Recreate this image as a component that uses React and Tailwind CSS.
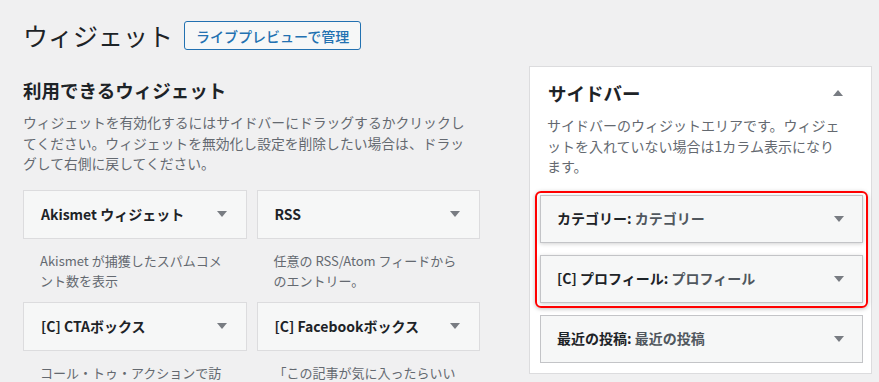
import React from 'react';

const Arrow = ({ up = false }) => (
  <svg width="10" height="6" viewBox="0 0 10 6" className="shrink-0">
    <polygon points={up ? '0,6 10,6 5,0' : '0,0 10,0 5,6'} fill="#787c82" />
  </svg>
);

const available = [
  { name: 'Akismet ウィジェット', desc: ['Akismet が捕獲したスパムコメ', 'ント数を表示'] },
  { name: 'RSS', desc: ['任意の RSS/Atom フィードから', 'のエントリー。'] },
  { name: '[C] CTAボックス', desc: ['コール・トゥ・アクションで訪', ''] },
  { name: '[C] Facebookボックス', desc: ['「この記事が気に入ったらいい', ''] },
];

function WidgetCard({ name }) {
  return (
    <div className="h-[49px] flex items-center justify-between pl-[17px] pr-[19px] bg-[#f6f7f7] border border-[#dcdcde]">
      <span className="text-[14px] font-semibold text-[#1d2327]">{name}</span>
      <Arrow />
    </div>
  );
}

function SidebarCard({ title, sub, shadow }) {
  return (
    <div
      className={
        'h-[48px] flex items-center justify-between pl-[16px] pr-[18px] bg-[#f6f7f7] border border-[#c3c4c7] ' +
        (shadow ? 'shadow-[0_1px_4px_rgba(0,0,0,0.18)]' : '')
      }
    >
      <span className="text-[14px] font-semibold">
        <span className="text-[#1d2327]">{title}:</span>
        <span className="text-[#50575e]"> {sub}</span>
      </span>
      <Arrow />
    </div>
  );
}

export default function App() {
  return (
    <div
      className="h-[382px] w-[879px] overflow-hidden bg-[#f0f0f1] pl-[23px]"
      style={{ fontFamily: '"Noto Sans CJK JP", "Noto Sans", sans-serif' }}
    >
      <div className="pt-[21px] flex items-center gap-[11px] h-[50px]">
        <h1 className="text-[25px] leading-[29px] font-normal text-[#1d2327]">ウィジェット</h1>
        <button className="h-[29px] px-[11px] rounded-[3px] border border-[#2271b1] bg-[#f6f7f7] text-[#2271b1] text-[14px] font-medium leading-none">
          ライブプレビューで管理
        </button>
      </div>

      <div className="flex gap-[49px]">
        <div className="w-[457px] shrink-0">
          <h2 className="mt-[26px] text-[18.5px] leading-[28px] font-bold text-[#1d2327]">利用できるウィジェット</h2>
          <p className="mt-[8px] text-[13.8px] leading-[20.5px] text-[#646970] whitespace-nowrap">
            ウィジェットを有効化するにはサイドバーにドラッグするかクリックし
            <br />
            てください。ウィジェットを無効化し設定を削除したい場合は、ドラッ
            <br />
            グして右側に戻してください。
          </p>
          <div className="mt-[16px] grid grid-cols-2 gap-x-[10px]">
            {available.map((w) => (
              <div key={w.name}>
                <WidgetCard name={w.name} />
                <p className="pt-[12px] pb-[11px] pl-[17px] text-[13px] leading-[20px] text-[#646970] whitespace-nowrap">
                  {w.desc[0]}
                  <br />
                  {w.desc[1]}
                </p>
              </div>
            ))}
          </div>
        </div>

        <div className="mt-[16px] w-[343px] h-[308px] shrink-0 bg-white border border-[#dcdcde] pl-[10px] pr-[8px]">
          <div className="flex items-center justify-between pl-[8px] pr-[20px] pt-[12px] h-[40px]">
            <h2 className="text-[18.5px] leading-[28px] font-bold text-[#1d2327]">サイドバー</h2>
            <Arrow up />
          </div>
          <p className="mt-[8px] pl-[7px] text-[14px] leading-[20.5px] text-[#646970] whitespace-nowrap">
            サイドバーのウィジットエリアです。ウィジェ
            <br />
            ットを入れていない場合は1カラム表示になり
            <br />
            ます。
          </p>
          <div className="relative mt-[18px] flex flex-col gap-[12px]">
            <SidebarCard title="カテゴリー" sub="カテゴリー" shadow />
            <SidebarCard title="[C] プロフィール" sub="プロフィール" shadow />
            <div className="absolute -left-[5px] -right-[5px] -top-[4px] -bottom-[5px] rounded-[6px] border-2 border-[#ff0000] shadow-[0_1px_4px_rgba(0,0,0,0.25)] pointer-events-none" />
          </div>
          <div className="mt-[12px]">
            <SidebarCard title="最近の投稿" sub="最近の投稿" />
          </div>
        </div>
      </div>
    </div>
  );
}
